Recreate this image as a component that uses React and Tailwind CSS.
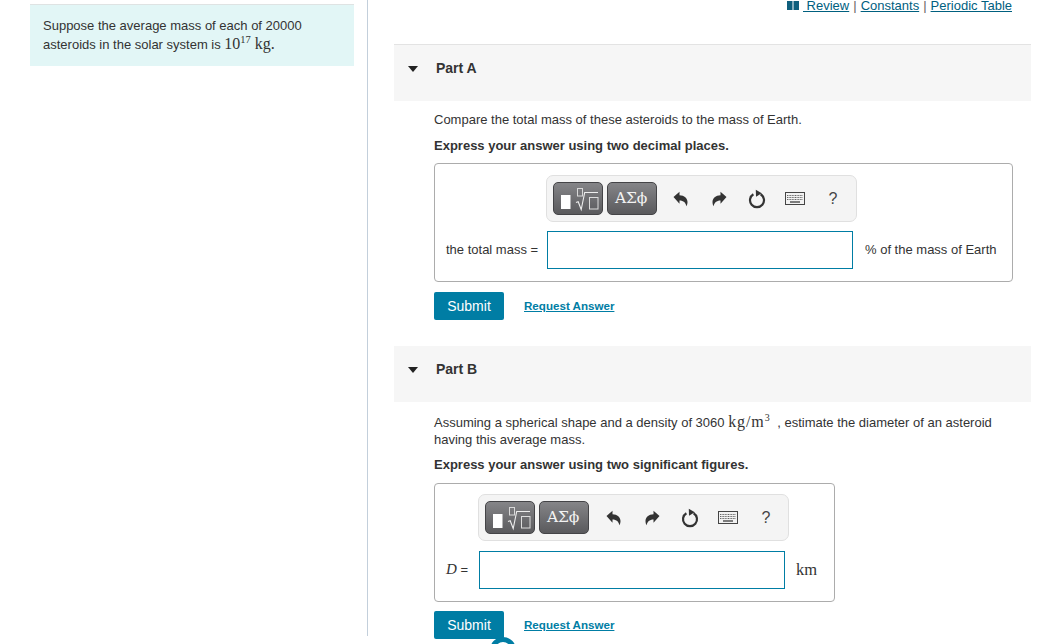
import React from "react";

const M = ({ children, className = "" }) => (
  <span className={"font-['Liberation_Serif','DejaVu_Serif',serif] leading-none " + className}>{children}</span>
);

function TemplateIcon() {
  return (
    <svg width="48" height="31" viewBox="0 0 48 31" fill="none">
      <rect x="7" y="12" width="9.500" height="14" fill="#fff" />
      <rect x="23.500" y="5.500" width="5" height="7.500" stroke="#d8d8d8" strokeWidth="1" />
      <path d="M22 19.500l2.200-.8 3 7.800 3.500-17h13.300" stroke="#eee" strokeWidth="1.100" />
      <rect x="35.500" y="14.500" width="8.500" height="11.500" stroke="#ddd" strokeWidth="1" />
    </svg>
  );
}

function Undo({ flip }) {
  return (
    <svg width="15" height="16" viewBox="0 0 15 16" className={flip ? "-scale-x-100" : ""}>
      <path d="M.5 6 6.500.8v3.400c4.800.2 8 3 8 6.800 0 1.800-.5 3.300-1.200 4.300-.3-3.300-2.900-5.700-6.800-5.700v3.200z" fill="#333" />
    </svg>
  );
}

function Redo() {
  return (
    <svg width="18" height="20" viewBox="0 0 18 20" fill="none">
      <path d="M5.400 5.200a7 7 0 1 0 7.200 0" stroke="#333" strokeWidth="2.200" />
      <path d="M7.800 .8 13.800 4.300 8 7.800z" fill="#333" />
    </svg>
  );
}

function Keyboard() {
  return (
    <svg width="20" height="13" viewBox="0 0 20 13" fill="none">
      <rect x=".5" y=".5" width="19" height="12" fill="#f2f2f2" stroke="#444" />
      <path d="M2 3.500h16M2 5.500h16M2 7.500h16" stroke="#666" strokeWidth="1" strokeDasharray="1 .6" />
      <path d="M5 10h10" stroke="#555" strokeWidth="1.500" />
    </svg>
  );
}

function Toolbar({ className = "", undoGap = "ml-[14px]" }) {
  const btn =
    "h-[33px] w-[50px] rounded-[5px] border border-[#444447] bg-linear-to-b from-[#858588] to-[#5a5a5d] flex items-center justify-center";
  return (
    <div className={"h-[47px] w-[311px] rounded-[7px] border border-[#e0e0e0] bg-[#f4f4f4] flex items-center pl-[6px] " + className}>
      <div className={btn + " mr-[4px]"}><TemplateIcon /></div>
      <div className={btn + " text-[#f2f2f2]"}>
        <span className="font-['DejaVu_Serif','Liberation_Serif',serif] text-[15.500px] tracking-[-0.3px] -ml-[2px]">ΑΣϕ</span>
      </div>
      <div className={"w-[18px] flex justify-center " + undoGap}><Undo /></div>
      <div className="w-[18px] ml-[21px] flex justify-center"><Undo flip /></div>
      <div className="w-[18px] ml-[20px] flex justify-center"><Redo /></div>
      <div className="w-[20px] ml-[19px] flex justify-center"><Keyboard /></div>
      <div className="w-[12px] ml-[22px] text-[16px] text-[#444] leading-none text-center">?</div>
    </div>
  );
}

function PartHeader({ title }) {
  return (
    <div className="h-[56px] bg-[#f6f6f6] flex pt-[15px]">
      <svg width="10" height="6" viewBox="0 0 10 6" className="ml-[14px] mt-[6px]"><path d="M0 0h10L5 6z" fill="#222" /></svg>
      <span className="ml-[18px] text-[14px] leading-[16px] font-bold text-[#333]">{title}</span>
    </div>
  );
}

function Actions() {
  return (
    <div className="flex items-center">
      <button className="h-[28px] w-[70px] rounded-[2px] bg-[#007da4] text-white text-[14px] leading-none">Submit</button>
      <a className="ml-[20px] text-[11.600px] font-bold text-[#007da4] underline">Request Answer</a>
    </div>
  );
}

export default function App() {
  return (
    <div className="relative h-[644px] w-[1053px] overflow-hidden bg-white font-['Liberation_Sans',Arial,sans-serif] text-[13px] text-[#333]">
      <div className="flex h-[636px]">
        <aside className="w-[368px] shrink-0 border-r border-[#c3cfdb] pl-[30px] pt-[4px]">
          <div className="h-[62px] w-[324px] border-t border-[#dfe3e3] bg-[#e2f6f6] px-[13px] pt-[11px] text-[13px] leading-[19px]">
            <div>Suppose the average mass of each of 20000</div>
            <div>
              asteroids in the solar system is{" "}
              <M className="text-[16px]">10<sup className="text-[10.500px] relative -top-[6px] align-baseline">17</sup> kg.</M>
            </div>
          </div>
        </aside>

        <main className="relative w-[663px] pl-[26px]">
          <nav className="h-[44px] pr-[19px] flex justify-end text-[13px] leading-[12px] text-[#00607f]">
            <svg width="12" height="9" viewBox="0 0 12 9" className="mt-[1px]"><path d="M0 0h5.500v9H0zM6.500 0H12v9H6.500z" fill="#0f5f7d" /></svg>
            <a className="underline whitespace-pre ml-[4px]"> Review</a>
            <span className="mx-[4px] text-[#666]">|</span>
            <a className="underline">Constants</a>
            <span className="mx-[4px] text-[#666]">|</span>
            <a className="underline">Periodic Table</a>
          </nav>

          <section className="w-[637px] border-t border-[#e3e3e3]">
            <PartHeader title="Part A" />
            <div className="pl-[40px] pr-[18px] pt-[10px]">
              <p className="leading-[17px]">Compare the total mass of these asteroids to the mass of Earth.</p>
              <p className="mt-[9px] leading-[17px] font-bold">Express your answer using two decimal places.</p>
              <div className="mt-[9px] h-[119px] w-[579px] rounded-[4px] border border-[#acacac] pt-[11px]">
                <Toolbar className="ml-[111px]" />
                <div className="mt-[9px] flex items-center pl-[11px] text-[13px]">
                  <span className="w-[101px]">the total mass =</span>
                  <div className="h-[38px] w-[306px] border border-[#007da4]" />
                  <span className="ml-[12px]">% of the mass of Earth</span>
                </div>
              </div>
              <div className="mt-[10px]"><Actions /></div>
            </div>
          </section>

          <section className="mt-[26px] w-[637px]">
            <PartHeader title="Part B" />
            <div className="pl-[40px] pr-[30px] pt-[12px]">
              <p className="leading-[17px]">
                Assuming a spherical shape and a density of 3060{" "}
                <M className="text-[16px] tracking-[0.9px]">kg/m<sup className="text-[10px] relative -top-[6px] align-baseline mr-[3px]">3</sup></M>{" "}
                , estimate the diameter of an asteroid having this average mass.
              </p>
              <p className="mt-[8px] leading-[17px] font-bold">Express your answer using two significant figures.</p>
              <div className="mt-[10px] h-[119px] w-[401px] rounded-[4px] border border-[#acacac] pt-[10px]">
                <Toolbar className="ml-[43px]" undoGap="ml-[15px]" />
                <div className="mt-[10px] flex items-center pl-[11px] text-[13px]">
                  <span className="w-[33px]"><M className="italic text-[15px]">D</M> =</span>
                  <div className="h-[38px] w-[306px] border border-[#007da4]" />
                  <M className="ml-[11px] text-[16.500px]">km</M>
                </div>
              </div>
              <div className="mt-[9px]"><Actions /></div>
            </div>
          </section>
        </main>
      </div>
      <div className="absolute left-[490px] top-[637px] h-[26px] w-[26px] rounded-full border-[5px] border-[#007da4]" />
    </div>
  );
}
